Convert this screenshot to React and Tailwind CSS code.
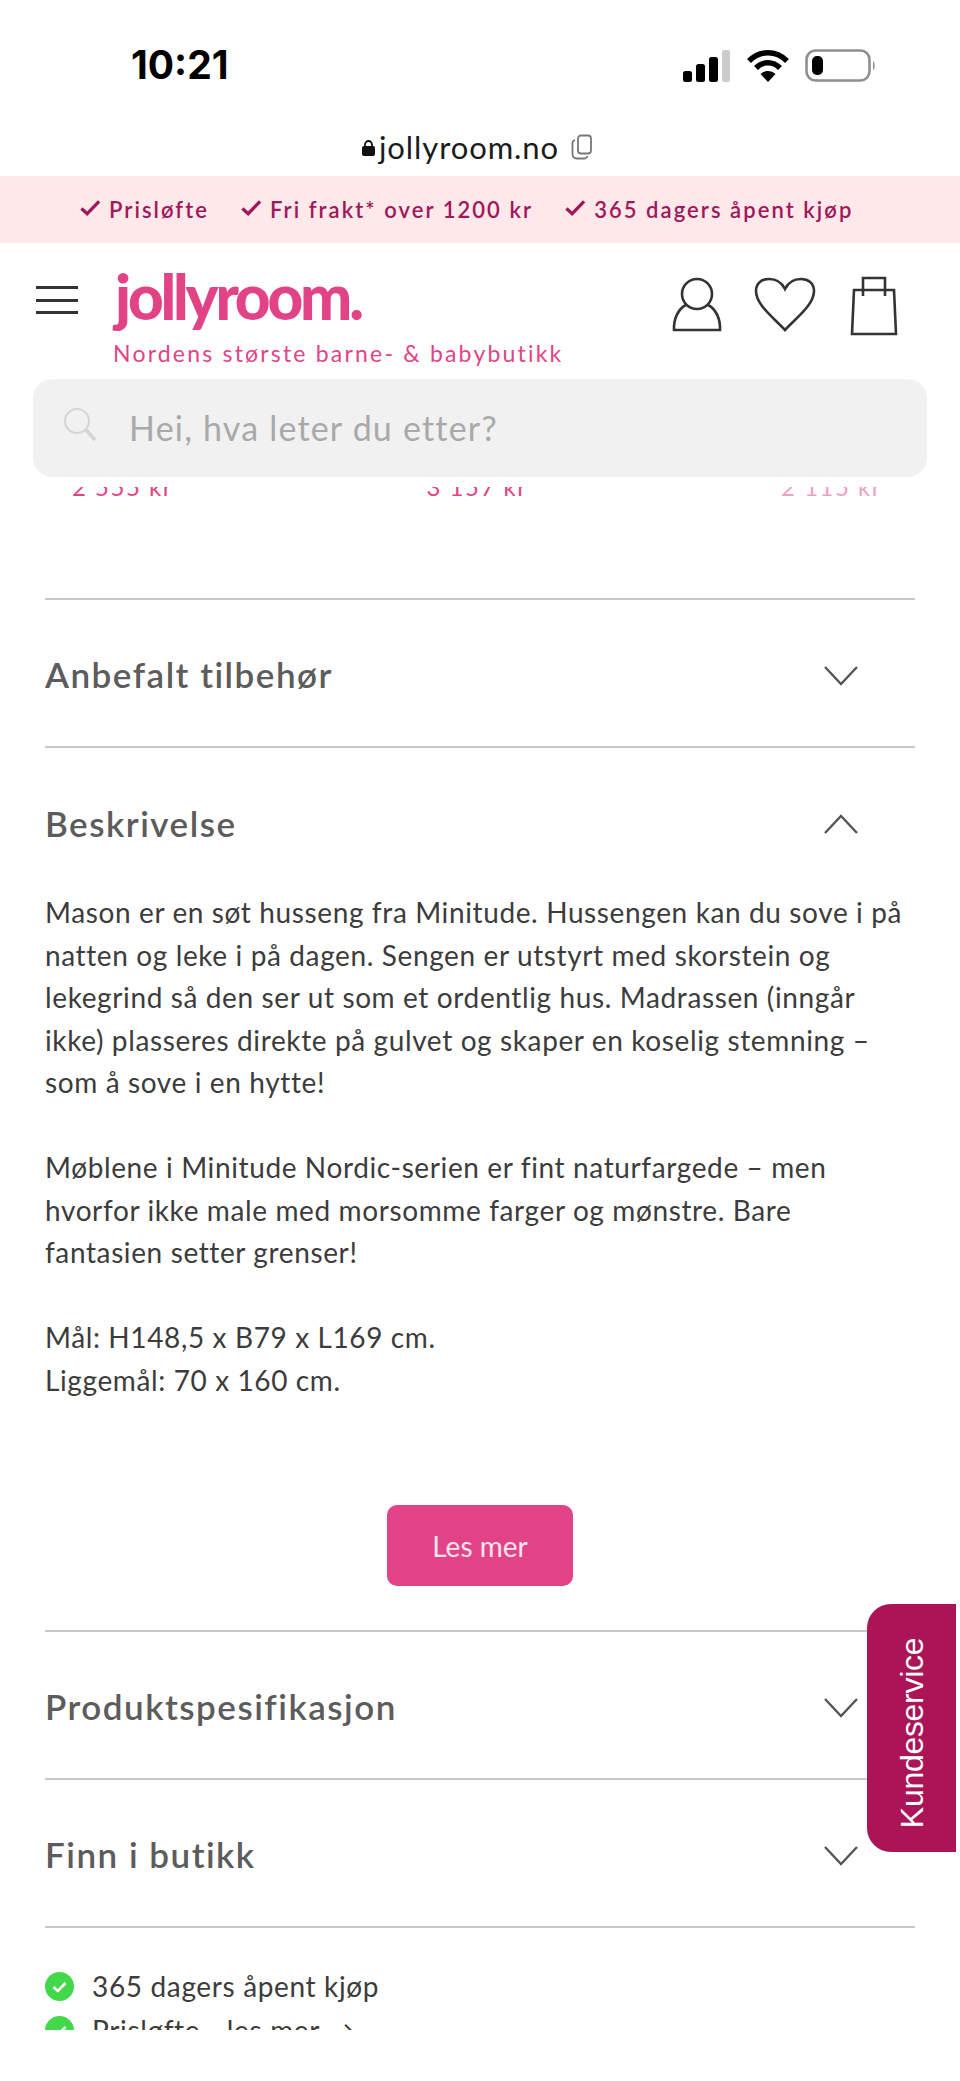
const font = { fontFamily: '"Lato", "Noto Sans", sans-serif' };

function Chevron({ up }) {
  return (
    <svg width="36" height="22" viewBox="0 0 36 22" fill="none" stroke="#555" strokeWidth="2.4" className={up ? "shrink-0 mt-[2px]" : "shrink-0 mt-[4px]"}>
      <path d={up ? "M2 20 L18 3 L34 20" : "M2 2 L18 19 L34 2"} />
    </svg>
  );
}

function AccHead({ title, up, h }) {
  return (
    <div className={`flex items-center justify-between pr-[56px] pt-[2px] ${h}`}>
      <span className="text-[35px] font-semibold text-[#5c5c5c] tracking-[1.5px]">{title}</span>
      <Chevron up={up} />
    </div>
  );
}

function Promo({ children }) {
  return (
    <span className="flex items-center gap-[8px]">
      <svg width="21" height="18" viewBox="0 0 22 18" fill="none" stroke="#a0175a" strokeWidth="3.4" className="-mt-[3px]"><path d="M1.5 9.5 L7.5 15 L20 2" /></svg>
      <span>{children}</span>
    </span>
  );
}

function Usp({ children }) {
  return (
    <div className="flex items-center gap-[18px] h-[44px] shrink-0">
      <svg width="29" height="29" viewBox="0 0 29 29" className="shrink-0">
        <circle cx="14.5" cy="14.5" r="14.5" fill="#42d84a" />
        <path d="M8.5 15 L12.8 19 L20.5 11" fill="none" stroke="#fff" strokeWidth="2.6" />
      </svg>
      <span className="text-[28px] text-[#3c3c3c] tracking-[0.65px]">{children}</span>
    </div>
  );
}

export default function App() {
  return (
    <div className="relative w-[960px] h-[2081px] bg-white overflow-hidden" style={font}>
      {/* status bar */}
      <div className="h-[124px] flex items-start justify-between pl-[131px] pr-[84px] pt-[40px]">
        <span className="text-[39px] leading-[50px] font-bold text-black" style={{ fontFamily: '"Inter", sans-serif', letterSpacing: '0px' }}>10:21</span>
        <div className="flex items-center gap-[15px] pt-[9px]">
          <svg width="50" height="32" viewBox="0 0 50 32">
            <rect x="2" y="21" width="9" height="11" rx="2.5" fill="#000" />
            <rect x="15" y="14" width="9" height="18" rx="2.5" fill="#000" />
            <rect x="28" y="7" width="9" height="25" rx="2.5" fill="#000" />
            <rect x="41" y="0" width="8" height="32" rx="2.5" fill="#ccc" />
          </svg>
          <svg width="44" height="34" viewBox="0 0 44 34" fill="none" stroke="#000" strokeWidth="5.5">
            <path d="M3 12 C14 1 30 1 41 12" />
            <path d="M10 19 C17 12 27 12 34 19" />
            <path d="M22 33 L14.5 25 C19 21 25 21 29.5 25 Z" fill="#000" stroke="none" />
          </svg>
          <svg width="71" height="34" viewBox="0 0 71 34">
            <rect x="1.5" y="1.5" width="63" height="30" rx="9" fill="none" stroke="#8e8e8e" strokeWidth="2.6" />
            <rect x="7" y="7" width="11" height="19" rx="5" fill="#000" />
            <path d="M68 12 C70 13 70.5 20 68 21 Z" fill="#8e8e8e" />
          </svg>
        </div>
      </div>

      {/* address */}
      <div className="h-[52px] flex items-start justify-center gap-[3px] pt-[3px] pr-[6px]">
        <svg width="15" height="18" viewBox="0 0 15 18" className="mt-[12px]"><path d="M4 8 V5.5 a3.5 3.5 0 0 1 7 0 V8" fill="none" stroke="#111" strokeWidth="1.8" /><rect x="1" y="7" width="13" height="10" rx="2" fill="#111" /></svg>
        <span className="text-[31px] leading-[40px] text-[#1b1b1b] tracking-[0.9px]">jollyroom.no</span>
        <svg width="22" height="26" viewBox="0 0 22 26" fill="none" stroke="#777" strokeWidth="1.8" className="ml-[9px] mt-[7px]">
          <rect x="7" y="1.5" width="13" height="18" rx="3" />
          <path d="M4 6 C2 6.5 1.5 8 1.5 9 V20 C1.5 23 3 24.5 6 24.5 H13 C15 24.5 16 23.5 16.5 22" />
        </svg>
      </div>

      {/* promo */}
      <div className="h-[67px] bg-[#fde8ea] flex items-center pl-[80px] gap-[32px] text-[22px] font-semibold text-[#a0175a] tracking-[2.05px]">
        <Promo>Prisløfte</Promo>
        <Promo>Fri frakt* over 1200 kr</Promo>
        <Promo>365 dagers åpent kjøp</Promo>
      </div>

      {/* header */}
      <div className="h-[136px] flex items-start">
        <div className="w-[113px] pl-[36px] pt-[43px] flex flex-col gap-[9.5px] shrink-0">
          <div className="w-[42px] h-[3px] bg-[#333]" />
          <div className="w-[42px] h-[3px] bg-[#333]" />
          <div className="w-[42px] h-[3px] bg-[#333]" />
        </div>
        <div className="flex flex-col w-[530px] shrink-0">
          <span className="h-[96px] pl-[2px] pt-[22px] text-[62px] leading-[62px] font-black text-[#e24387] tracking-[-3.2px]">jollyroom.</span>
          <span className="text-[23px] leading-[28px] text-[#e24387] tracking-[2.2px] whitespace-nowrap">Nordens største barne- &amp; babybutikk</span>
        </div>
        <div className="flex items-start pl-[29px] pt-[34px] text-[#333]">
          <svg width="50" height="56" viewBox="0 0 50 56" fill="none" stroke="#333" strokeWidth="2.6">
            <circle cx="25" cy="17" r="15" />
            <path d="M14 28 C6 32 1.5 42 2 53 H48 C48.5 42 44 32 36 28" />
          </svg>
          <svg width="62" height="56" viewBox="0 0 62 56" fill="none" stroke="#333" strokeWidth="2.6" className="ml-[32px]">
            <path d="M31 53 C20 41 2 28 2 14 C2 6 8 2 15 2 C22 2 28 6 31 12 C34 6 40 2 47 2 C54 2 60 6 60 14 C60 28 42 41 31 53 Z" />
          </svg>
          <svg width="48" height="60" viewBox="0 0 48 60" fill="none" stroke="#333" strokeWidth="2.6" className="ml-[34px] -mt-[1px]">
            <path d="M4 14 H44 L46 58 H2 Z" />
            <path d="M13 20 V2 H35 V20" />
          </svg>
        </div>
      </div>

      {/* search */}
      <div className="relative z-10 mx-[33px] h-[98px] rounded-[20px] bg-[#f1f1f1] flex items-center shrink-0">
        <svg width="34" height="36" viewBox="0 0 34 36" fill="none" stroke="#d4d4d4" strokeWidth="2" className="ml-[30px] -mt-[6px]">
          <circle cx="14" cy="14" r="12" />
          <path d="M23 23 L32 33" strokeWidth="3.5" />
        </svg>
        <span className="ml-[32px] -mt-[1px] text-[34px] text-[#a9a9a9] tracking-[1.2px]">Hei, hva leter du etter?</span>
      </div>

      {/* clipped prices */}
      <div className="h-[26px] pt-[10px]">
        <div className="h-[11px] overflow-hidden text-[#e24387] text-[24px] leading-[30px]">
          <div className="flex justify-between pl-[72px] pr-[78px] -mt-[15px] tracking-[1.5px]">
            <span>2 555 kr</span>
            <span>3 157 kr</span>
            <span className="opacity-50">2 115 kr</span>
          </div>
        </div>
      </div>

      {/* accordions */}
      <div className="px-[45px] pt-[95px]">
        <div className="border-t-2 border-[#c8c8c8]">
          <AccHead title="Anbefalt tilbehør" h="h-[146px]" />
        </div>
        <div className="border-t-2 border-[#c8c8c8]">
          <AccHead title="Beskrivelse" up h="h-[148px]" />
          <div className="text-[28px] leading-[42.5px] text-[#3c3c3c] tracking-[0.62px] -mt-[5px]">
            <p className="whitespace-nowrap">Mason er en søt husseng fra Minitude. Hussengen kan du sove i på</p>
            <p className="whitespace-nowrap">natten og leke i på dagen. Sengen er utstyrt med skorstein og</p>
            <p className="whitespace-nowrap">lekegrind så den ser ut som et ordentlig hus. Madrassen (inngår</p>
            <p className="whitespace-nowrap">ikke) plasseres direkte på gulvet og skaper en koselig stemning –</p>
            <p className="whitespace-nowrap">som å sove i en hytte!</p>
            <p className="mt-[42.5px] whitespace-nowrap">Møblene i Minitude Nordic-serien er fint naturfargede – men</p>
            <p className="whitespace-nowrap">hvorfor ikke male med morsomme farger og mønstre. Bare</p>
            <p className="whitespace-nowrap">fantasien setter grenser!</p>
            <p className="mt-[42.5px] whitespace-nowrap">Mål: H148,5 x B79 x L169 cm.</p>
            <p className="whitespace-nowrap">Liggemål: 70 x 160 cm.</p>
          </div>
          <div className="flex justify-center pt-[104px] pb-[44px]">
            <div className="w-[186px] h-[81px] rounded-[10px] bg-[#e24387] flex items-center justify-center text-[28px] text-[#fde4ef]">Les mer</div>
          </div>
        </div>
        <div className="border-t-2 border-[#c8c8c8]">
          <AccHead title="Produktspesifikasjon" h="h-[146px]" />
        </div>
        <div className="border-t-2 border-[#c8c8c8]">
          <AccHead title="Finn i butikk" h="h-[146px]" />
        </div>
        <div className="border-t-2 border-[#c8c8c8] pt-[36px] h-[104px] overflow-hidden flex flex-col">
          <Usp>365 dagers åpent kjøp</Usp>
          <Usp>Prisløfte - les mer →</Usp>
        </div>
      </div>

      {/* floating tab */}
      <div className="absolute left-[867px] top-[1604px] w-[89px] h-[248px] rounded-l-[24px] bg-[#ab1557] flex items-center justify-center pt-[10px] pl-[2px]">
        <span className="-rotate-90 whitespace-nowrap text-[32px] text-white tracking-[-0.3px]" style={{ fontFamily: '"Liberation Sans", sans-serif' }}>Kundeservice</span>
      </div>
    </div>
  );
}
